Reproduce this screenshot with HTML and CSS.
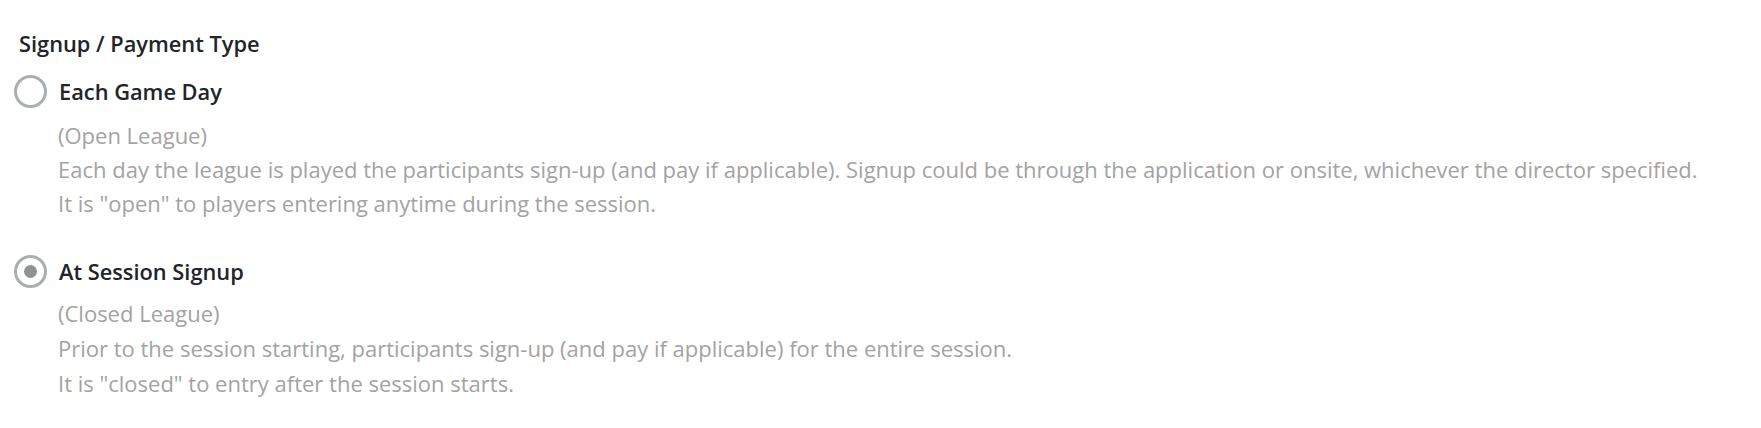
FILE: index.html
```html
<!DOCTYPE html>
<html lang="en">
<head>
<meta charset="utf-8">
<title>Signup / Payment Type</title>
<link rel="stylesheet" href="styles.css">
</head>
<body>
<div class="form">
  <div class="group-title">Signup / Payment Type</div>
  <div class="option">
    <label class="option-row">
      <input type="radio" name="ptype" class="radio">
      <span class="option-label">Each Game Day</span>
    </label>
    <div class="desc">
      <div>(Open League)</div>
      <div>Each day the league is played the participants sign-up (and pay if applicable). Signup could be through the application or onsite, whichever the director specified.</div>
      <div>It is "open" to players entering anytime during the session.</div>
    </div>
  </div>
  <div class="option option-second">
    <label class="option-row">
      <input type="radio" name="ptype" class="radio" checked>
      <span class="option-label">At Session Signup</span>
    </label>
    <div class="desc">
      <div>(Closed League)</div>
      <div>Prior to the session starting, participants sign-up (and pay if applicable) for the entire session.</div>
      <div>It is "closed" to entry after the session starts.</div>
    </div>
  </div>
</div>
</body>
</html>
```
FILE: styles.css
```css
html, body {
  margin: 0;
  padding: 0;
  background: #ffffff;
}

body {
  font-family: "Open Sans", "Noto Sans", "Liberation Sans", sans-serif;
  color: #212529;
}

.form {
  padding: 26px 19px;
}

.group-title {
  font-size: 21.8px;
  font-weight: 600;
  line-height: 36px;
}

.option {
  margin-left: -5px;
}

.option-row {
  display: flex;
  align-items: center;
  gap: 12px;
  height: 36px;
  margin-top: 11px;
  cursor: pointer;
}

.option-second .option-row {
  margin-top: 33px;
}

.radio {
  appearance: none;
  -webkit-appearance: none;
  margin: 0;
  width: 33px;
  height: 33px;
  border: 3px solid #a9aeb5;
  border-radius: 50%;
  box-sizing: border-box;
  display: grid;
  place-items: center;
  background: #fff;
  flex: none;
}

.radio:checked::before {
  content: "";
  width: 13px;
  height: 13px;
  border-radius: 50%;
  background: #929292;
}

.option-label {
  font-size: 21.8px;
  font-weight: 600;
  color: #212529;
}

.desc {
  margin-left: 44px;
  margin-top: 9px;
  font-size: 22px;
  line-height: 34px;
  color: #a3a3a3;
}

.option-second .desc {
  margin-top: 7px;
  line-height: 35px;
}
```
